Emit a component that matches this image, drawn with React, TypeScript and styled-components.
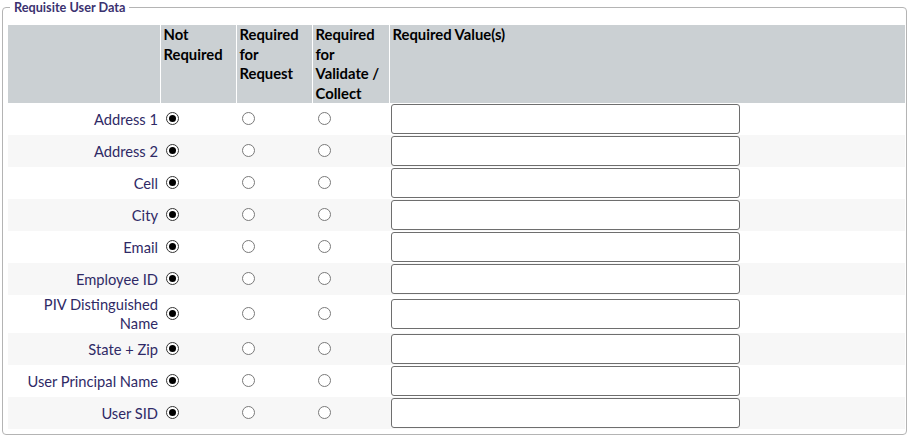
import React from "react";
import styled, { createGlobalStyle } from "styled-components";

const Global = createGlobalStyle`
  html, body { margin: 0; padding: 0; background: #ffffff; }
  body { font-family: Lato, "Open Sans", sans-serif; }
`;

const Page = styled.div`
  padding: 0 3px 0 2px;
`;

const Fieldset = styled.fieldset`
  margin: 0;
  width: 905px;
  box-sizing: border-box;
  border: 1px solid #b4b4b4;
  border-radius: 4px;
  padding: 10px 0 5px 5px;
`;

const Legend = styled.legend`
  margin-left: 2px;
  padding: 0 4px 0 4px;
  font-size: 12.7px;
  font-weight: 700;
  line-height: 15px;
  color: #3b3270;
`;

const Table = styled.table`
  width: 897px;
  border-collapse: collapse;
  table-layout: fixed;
  font-size: 14.7px;
`;

const HeadCell = styled.th<{ $first?: boolean }>`
  background: #cbd0d3;
  color: #000;
  font-weight: 700;
  font-size: 14.8px;
  text-align: left;
  vertical-align: top;
  line-height: 19.5px;
  padding: 0 0 0 3px;
  border-left: ${(p) => (p.$first ? "none" : "1px solid #ffffff")};
`;

const Row = styled.tr<{ $alt: boolean }>`
  background: ${(p) => (p.$alt ? "#f7f7f7" : "#ffffff")};
`;

const LabelCell = styled.td`
  text-align: right;
  vertical-align: middle;
  color: #2f2a66;
  line-height: 19px;
  padding: 0 2px 0 0;
`;

const RadioCell = styled.td`
  vertical-align: middle;
  padding: 0 0 1px 6px;
  line-height: 0;
`;

const InputCell = styled.td`
  vertical-align: middle;
  padding: 1px 0 1px 2px;
  line-height: 0;
`;

const Radio = styled.span<{ $on: boolean }>`
  display: inline-block;
  width: 13px;
  height: 13px;
  box-sizing: border-box;
  border-radius: 50%;
  border: 1px solid ${(p) => (p.$on ? "#333333" : "#7a7a7a")};
  background: #ffffff;
  position: relative;
  &::after {
    content: "";
    display: ${(p) => (p.$on ? "block" : "none")};
    position: absolute;
    left: 2px;
    top: 2px;
    width: 7px;
    height: 7px;
    border-radius: 50%;
    background: #000000;
  }
`;

const TextInput = styled.input`
  width: 349px;
  height: 30px;
  box-sizing: border-box;
  border: 1px solid #6e6e6e;
  border-radius: 3px;
  background: #ffffff;
  margin: 0;
  padding: 0 4px;
  font-family: inherit;
  font-size: 14px;
`;

const fields = [
  "Address 1",
  "Address 2",
  "Cell",
  "City",
  "Email",
  "Employee ID",
  "PIV Distinguished Name",
  "State + Zip",
  "User Principal Name",
  "User SID",
];

export default function App() {
  return (
    <>
      <Global />
      <Page>
        <Fieldset>
          <Legend>Requisite User Data</Legend>
          <Table>
            <colgroup>
              <col style={{ width: 152 }} />
              <col style={{ width: 76 }} />
              <col style={{ width: 76 }} />
              <col style={{ width: 77 }} />
              <col />
            </colgroup>
            <thead>
              <tr>
                <HeadCell $first></HeadCell>
                <HeadCell>
                  Not
                  <br />
                  Required
                </HeadCell>
                <HeadCell>
                  Required
                  <br />
                  for
                  <br />
                  Request
                </HeadCell>
                <HeadCell>
                  Required
                  <br />
                  for
                  <br />
                  Validate /
                  <br />
                  Collect
                </HeadCell>
                <HeadCell>Required Value(s)</HeadCell>
              </tr>
            </thead>
            <tbody>
              {fields.map((f, i) => (
                <Row key={f} $alt={i % 2 === 1}>
                  <LabelCell>
                    {f === "PIV Distinguished Name" ? (
                      <>
                        PIV Distinguished
                        <br />
                        Name
                      </>
                    ) : (
                      f
                    )}
                  </LabelCell>
                  <RadioCell>
                    <Radio $on={true} />
                  </RadioCell>
                  <RadioCell>
                    <Radio $on={false} />
                  </RadioCell>
                  <RadioCell>
                    <Radio $on={false} />
                  </RadioCell>
                  <InputCell>
                    <TextInput type="text" />
                  </InputCell>
                </Row>
              ))}
            </tbody>
          </Table>
        </Fieldset>
      </Page>
    </>
  );
}
